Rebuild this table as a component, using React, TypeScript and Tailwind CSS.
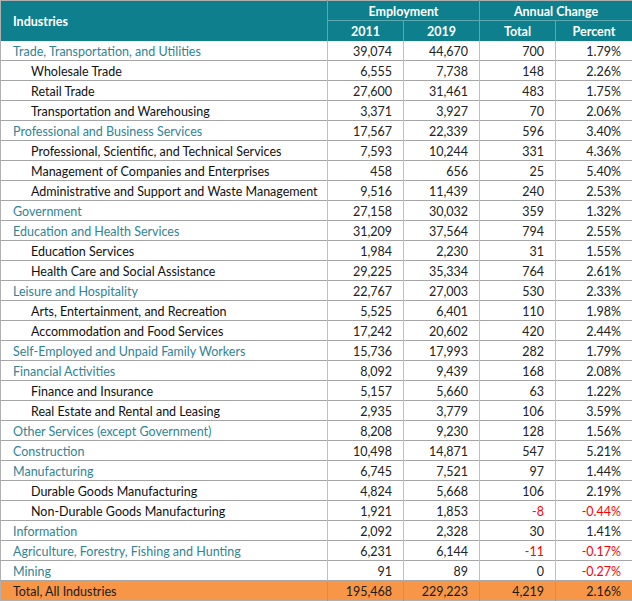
type Row = {
	name: string
	y2011: string
	y2019: string
	total: string
	pct: string
	sub?: boolean
}

const rows: Row[] = [
	{ name: 'Trade, Transportation, and Utilities', y2011: '39,074', y2019: '44,670', total: '700', pct: '1.79%' },
	{ name: 'Wholesale Trade', y2011: '6,555', y2019: '7,738', total: '148', pct: '2.26%', sub: true },
	{ name: 'Retail Trade', y2011: '27,600', y2019: '31,461', total: '483', pct: '1.75%', sub: true },
	{ name: 'Transportation and Warehousing', y2011: '3,371', y2019: '3,927', total: '70', pct: '2.06%', sub: true },
	{ name: 'Professional and Business Services', y2011: '17,567', y2019: '22,339', total: '596', pct: '3.40%' },
	{ name: 'Professional, Scientific, and Technical Services', y2011: '7,593', y2019: '10,244', total: '331', pct: '4.36%', sub: true },
	{ name: 'Management of Companies and Enterprises', y2011: '458', y2019: '656', total: '25', pct: '5.40%', sub: true },
	{ name: 'Administrative and Support and Waste Management', y2011: '9,516', y2019: '11,439', total: '240', pct: '2.53%', sub: true },
	{ name: 'Government', y2011: '27,158', y2019: '30,032', total: '359', pct: '1.32%' },
	{ name: 'Education and Health Services', y2011: '31,209', y2019: '37,564', total: '794', pct: '2.55%' },
	{ name: 'Education Services', y2011: '1,984', y2019: '2,230', total: '31', pct: '1.55%', sub: true },
	{ name: 'Health Care and Social Assistance', y2011: '29,225', y2019: '35,334', total: '764', pct: '2.61%', sub: true },
	{ name: 'Leisure and Hospitality', y2011: '22,767', y2019: '27,003', total: '530', pct: '2.33%' },
	{ name: 'Arts, Entertainment, and Recreation', y2011: '5,525', y2019: '6,401', total: '110', pct: '1.98%', sub: true },
	{ name: 'Accommodation and Food Services', y2011: '17,242', y2019: '20,602', total: '420', pct: '2.44%', sub: true },
	{ name: 'Self-Employed and Unpaid Family Workers', y2011: '15,736', y2019: '17,993', total: '282', pct: '1.79%' },
	{ name: 'Financial Activities', y2011: '8,092', y2019: '9,439', total: '168', pct: '2.08%' },
	{ name: 'Finance and Insurance', y2011: '5,157', y2019: '5,660', total: '63', pct: '1.22%', sub: true },
	{ name: 'Real Estate and Rental and Leasing', y2011: '2,935', y2019: '3,779', total: '106', pct: '3.59%', sub: true },
	{ name: 'Other Services (except Government)', y2011: '8,208', y2019: '9,230', total: '128', pct: '1.56%' },
	{ name: 'Construction', y2011: '10,498', y2019: '14,871', total: '547', pct: '5.21%' },
	{ name: 'Manufacturing', y2011: '6,745', y2019: '7,521', total: '97', pct: '1.44%' },
	{ name: 'Durable Goods Manufacturing', y2011: '4,824', y2019: '5,668', total: '106', pct: '2.19%', sub: true },
	{ name: 'Non-Durable Goods Manufacturing', y2011: '1,921', y2019: '1,853', total: '-8', pct: '-0.44%', sub: true },
	{ name: 'Information', y2011: '2,092', y2019: '2,328', total: '30', pct: '1.41%' },
	{ name: 'Agriculture, Forestry, Fishing and Hunting', y2011: '6,231', y2019: '6,144', total: '-11', pct: '-0.17%' },
	{ name: 'Mining', y2011: '91', y2019: '89', total: '0', pct: '-0.27%' },
]

const neg = (v: string) => (v.startsWith('-') ? 'text-[#ff0000]' : 'text-[#222222]')

export default function App() {
	return (
		<div className="w-[632px] h-[601px] bg-white font-['Lato',sans-serif] text-[12.5px] leading-none">
			<table className="w-[632px] table-fixed border-collapse border border-[#b0b0b0] [&_td]:pt-[3px] [&_th]:pt-[3px]">
				<colgroup>
					<col className="w-[327px]" />
					<col className="w-[76px]" />
					<col className="w-[76px]" />
					<col className="w-[76px]" />
					<col className="w-[77px]" />
				</colgroup>
				<thead>
					<tr className="h-[20px] bg-[#0e7f8c] text-white font-bold">
						<th rowSpan={2} className="text-left pl-3 border-r border-[#5fa8b0] font-bold">
							Industries
						</th>
						<th colSpan={2} className="text-center border-r border-b border-[#5fa8b0]">Employment</th>
						<th colSpan={2} className="text-center border-b border-[#5fa8b0]">Annual Change</th>
					</tr>
					<tr className="h-[20px] bg-[#0e7f8c] text-white font-bold">
						<th className="text-center border-r border-[#5fa8b0]">2011</th>
						<th className="text-center border-r border-[#5fa8b0]">2019</th>
						<th className="text-center border-r border-[#5fa8b0]">Total</th>
						<th className="text-center">Percent</th>
					</tr>
				</thead>
				<tbody>
					{rows.map((r) => (
						<tr key={r.name} className="h-[20px] border-b border-[#a6a6a6]">
							<td
								className={
									r.sub
										? 'pl-[30px] text-[#111111] border-r border-[#bfbfbf] whitespace-nowrap'
										: 'pl-3 text-[#2f8496] border-r border-[#bfbfbf] whitespace-nowrap'
								}
							>
								{r.name}
							</td>
							<td className="text-right pr-[11px] text-[#222222] border-r border-[#bfbfbf]">{r.y2011}</td>
							<td className="text-right pr-[11px] text-[#222222] border-r border-[#bfbfbf]">{r.y2019}</td>
							<td className={`text-right pr-[11px] border-r border-[#bfbfbf] ${neg(r.total)}`}>{r.total}</td>
							<td className={`text-right pr-[11px] ${neg(r.pct)}`}>{r.pct}</td>
						</tr>
					))}
					<tr className="h-[20px] bg-[#f79646] text-[#1a1a1a]">
						<td className="pl-3 border-r border-[#e08a44]">Total, All Industries</td>
						<td className="text-right pr-[11px] border-r border-[#e08a44]">195,468</td>
						<td className="text-right pr-[11px] border-r border-[#e08a44]">229,223</td>
						<td className="text-right pr-[11px] border-r border-[#e08a44]">4,219</td>
						<td className="text-right pr-[11px]">2.16%</td>
					</tr>
				</tbody>
			</table>
		</div>
	)
}
